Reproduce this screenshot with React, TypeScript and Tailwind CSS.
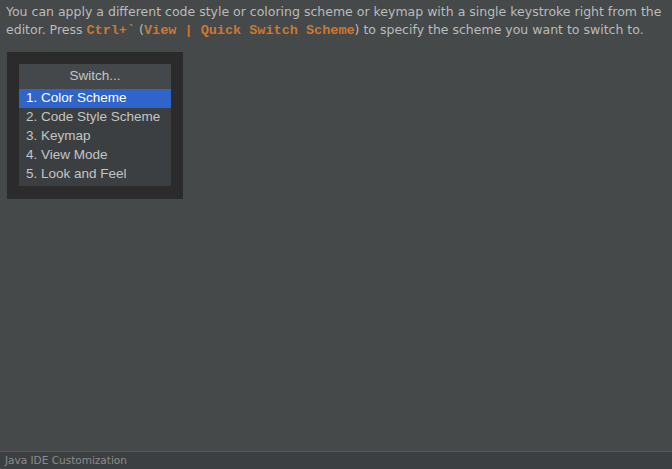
const items = ["1. Color Scheme", "2. Code Style Scheme", "3. Keymap", "4. View Mode", "5. Look and Feel"];

export default function App() {
	return (
		<div className="flex flex-col w-[672px] h-[469px] bg-[#45494a] overflow-hidden">
			<div className="flex-1 px-[6px] pt-[3px]">
				<p className="text-[12.5px] leading-[18px] text-[#bbbbbb] font-['DejaVu_Sans',sans-serif]">
					You can apply a different code style or coloring scheme or keymap with a single keystroke right from the editor. Press{" "}
					<span className="text-[13.5px] leading-none font-['Liberation_Mono',monospace] font-bold text-[#cc7832]">Ctrl+`</span>{" "}
					(<span className="text-[13.5px] leading-none font-['Liberation_Mono',monospace] font-bold text-[#cc7832]">View | Quick Switch Scheme</span>) to specify the scheme you want to switch to.
				</p>
				<div className="mt-[13px] ml-[1px] w-[176px] bg-[#2b2b2b] p-[12px] pb-[13px]">
					<div className="bg-[#3c3f41] font-['Liberation_Sans',sans-serif] text-[13.5px] text-[#c4c4c4]">
						<div className="h-[25px] flex items-center justify-center bg-[#45484b]">Switch...</div>
						{items.map((item, i) => (
							<div
								key={item}
								className={`h-[19px] flex items-center px-[7px] ${i === 0 ? "bg-[#2f65ca] text-white" : ""}`}
							>
								{item}
							</div>
						))}
						<div className="h-[2px]" />
					</div>
				</div>
			</div>
			<div className="h-[18px] border-t border-[#555a5c] bg-[#3c3f41] px-[5px] text-[10.5px] leading-[17px] text-[#8c8c8c] font-['DejaVu_Sans',sans-serif]">
				Java IDE Customization
			</div>
		</div>
	);
}
